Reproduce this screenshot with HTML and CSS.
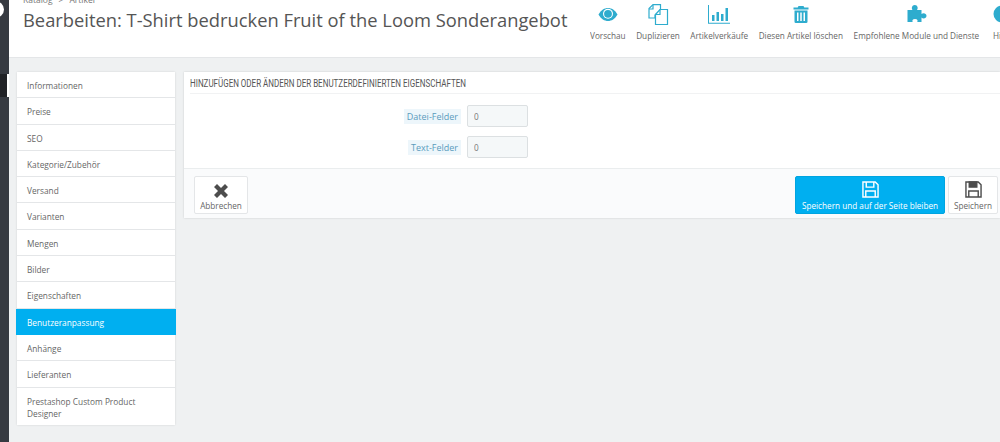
FILE: index.html
```html
<!doctype html>
<html>
<head>
<meta charset="utf-8">
<title>Bearbeiten</title>
<link rel="stylesheet" href="styles.css">
</head>

<body>
	<div class="page">
		<div class="sidebar">
			<span class="logo_dot"></span>
			<span class="side_mark"></span>
		</div>
		<div class="main">
			<div class="head">
				<div class="head_left">
					<div class="crumb"><span>Katalog</span><span>&gt;</span><span>Artikel</span></div>
					<h1>Bearbeiten: T-Shirt bedrucken Fruit of the Loom Sonderangebot</h1>
				</div>
				<ul class="tools">
					<li>
						<svg width="24" height="22" viewBox="0 0 24 22"><path fill="#2eacce" d="M2.500 10.500C5 6 8.500 4 12 4s7 2 9.500 6.500C19 15 15.500 17 12 17s-7-2-9.500-6.500z"/><circle cx="12" cy="9.800" r="5" fill="#fff"/><circle cx="12" cy="9.800" r="3.900" fill="#2eacce"/></svg>
						<span>Vorschau</span>
					</li>
					<li>
						<svg width="24" height="22" viewBox="0 0 24 22" fill="none" stroke="#2eacce" stroke-width="1.200"><path d="M7 .6h7.500v5L9 11v3H3V4.500z"/><path d="M7 1v4H3"/><path fill="#fff" d="M14 5.500h7.500V20.500H9.500V10.500z"/><path d="M14 5.500V10.500H9.500"/></svg>
						<span>Duplizieren</span>
					</li>
					<li>
						<svg width="24" height="22" viewBox="0 0 24 22" fill="#2eacce"><path d="M1 1h1v17.800h21v1H1z"/><rect x="5" y="11" width="2.500" height="6"/><rect x="9.500" y="8" width="2.500" height="9"/><rect x="14" y="10" width="2.500" height="7"/><rect x="18.500" y="4" width="2.500" height="13"/></svg>
						<span>Artikelverkäufe</span>
					</li>
					<li>
						<svg width="24" height="22" viewBox="0 0 24 22" fill="#2eacce"><path d="M9.500 2h5l.8 1.500h4.200v2h-15v-2h4.200z"/><path fill-rule="evenodd" d="M5.500 6.500h13v11.200A1.300 1.300 0 0 1 17.200 19H6.800a1.300 1.300 0 0 1-1.300-1.300zM8 8.500v8.500h1.500V8.500zM11.250 8.500v8.500h1.500V8.500zM14.500 8.500v8.500H16V8.500z"/></svg>
						<span>Diesen Artikel löschen</span>
					</li>
					<li>
						<svg width="24" height="22" viewBox="0 0 24 22" fill="#2eacce"><path d="M3.500 6h5C7.200 4.500 7.800 1 10.800 1s3.600 3.500 2.200 5h4.500v4c1.500-1.500 5-1 5 1.800s-3.500 3.400-5 1.800V18h-4.300c1-1.500.3-3-2.200-3s-3.100 1.500-2.300 3H3.500z"/></svg>
						<span>Empfohlene Module und Dienste</span>
					</li>
					<li>
						<svg width="24" height="22" viewBox="0 0 24 22"><circle cx="12" cy="10" r="8.500" fill="#2eacce"/></svg>
						<span>Hilfe</span>
					</li>
				</ul>
			</div>
			<div class="content">
				<ul class="menu">
					<li>Informationen</li>
					<li>Preise</li>
					<li>SEO</li>
					<li>Kategorie/Zubehör</li>
					<li>Versand</li>
					<li>Varianten</li>
					<li>Mengen</li>
					<li>Bilder</li>
					<li>Eigenschaften</li>
					<li class="cur">Benutzeranpassung</li>
					<li>Anhänge</li>
					<li>Lieferanten</li>
					<li>Prestashop Custom Product Designer</li>
				</ul>
				<div class="panel">
					<h3><span>Hinzufügen oder ändern der benutzerdefinierten Eigenschaften</span></h3>
					<div class="form">
						<div class="row">
							<label><span>Datei-Felder</span></label>
							<input type="text" value="0">
						</div>
						<div class="row">
							<label><span>Text-Felder</span></label>
							<input type="text" value="0">
						</div>
					</div>
					<div class="foot">
						<a class="btn btn_cancel">
							<svg width="14" height="14" viewBox="0 0 14 14"><path fill="#4d4d4d" d="M0 3l3-3 4 4 4-4 3 3-4 4 4 4-3 3-4-4-4 4-3-3 4-4z"/></svg>
							<span>Abbrechen</span>
						</a>
						<div class="foot_right">
							<a class="btn btn_blue">
								<svg width="17" height="17" viewBox="0 0 18 18" fill="none" stroke="#fff" stroke-width="1.500"><path d="M1 1h13l3 3v13H1z"/><path d="M4.500 1v5.500h8V1M4 17v-6.500h10V17"/></svg>
								<span>Speichern und auf der Seite bleiben</span>
							</a>
							<a class="btn btn_save">
								<svg width="17" height="17" viewBox="0 0 18 18" fill="none" stroke="#4d4d4d" stroke-width="1.500"><path d="M1 1h13l3 3v13H1z"/><path fill="#4d4d4d" d="M4.500 1v5.500h8V1z"/><path d="M4 17v-6.500h10V17"/></svg>
								<span>Speichern</span>
							</a>
						</div>
					</div>
				</div>
			</div>
		</div>
	</div>
</body>
</html>
```

FILE: styles.css
```css
*{ margin:0; padding:0; list-style:none; box-sizing:border-box; }
html,body{ height:442px; overflow:hidden; }
body{ background:#eff1f2; font-family:"Open Sans","Noto Sans",sans-serif; font-size:8.2px; color:#666; }
.page{ display:flex; height:442px; }
.sidebar{ position:relative; width:9px; flex:none; background:#363a41; }
.logo_dot{ position:absolute; left:-14px; top:1px; width:18px; height:17px; border-radius:50%; background:#fff; }
.side_mark{ position:absolute; left:0; top:74px; width:9px; height:23px; background:#202226; border-right:2px solid #fff; }
.main{ flex:1; min-width:0; }
.head{ display:flex; height:58px; background:#fff; border-bottom:1px solid #e4e6e8; overflow:hidden; }
.head_left{ flex:1; min-width:0; padding-left:14px; }
.crumb{ display:flex; gap:6px; height:9px; margin-top:-5px; font-size:8.500px; line-height:9px; color:#777; }
h1{ margin-top:3px; font-size:18.340px; font-weight:400; line-height:26px; color:#555; white-space:nowrap; }
.tools{ display:flex; flex:none; gap:10.600px; width:410px; padding-top:4px; overflow:hidden; }
.tools li{ display:flex; flex-direction:column; align-items:center; flex:none; gap:4px; font-size:8.200px; line-height:12px; color:#666; white-space:nowrap; }
.content{ display:flex; align-items:flex-start; gap:9px; padding:14px 0 0 8px; }
.menu{ width:158px; flex:none; background:#fff; box-shadow:0 0 2px rgba(0,0,0,.12); }
.menu li{ padding:8px 10px 5px; border-bottom:1px solid #e4e6e8; font-size:8.300px; line-height:12.300px; color:#666; }
.menu li:last-child{ border-bottom:none; line-height:12px; }
.menu .cur{ margin:0 -1px; padding-left:11px; background:#00aff0; color:#fff; border-bottom:none; padding-bottom:6px; }
.panel{ flex:1; min-width:0; background:#fff; box-shadow:0 0 2px rgba(0,0,0,.15); }
h3{ margin:0 0 0 6px; height:22px; border-bottom:1px solid #f1f2f3; font-family:Roboto,sans-serif; font-size:10px; font-weight:400; line-height:23px; color:#555; text-transform:uppercase; white-space:nowrap; }
h3 span{ display:inline-block; transform:scaleX(.8); transform-origin:left center; }
.form{ display:flex; flex-direction:column; gap:9.300px; height:74px; padding-top:11px; }
.row{ display:flex; align-items:center; height:22px; }
.row label{ width:277px; text-align:right; font-size:9px; line-height:13px; color:#5a9bbd; }
.row label span{ padding:1px 3px; background:#edf6fb; }
.row input{ width:61px; height:22px; margin-left:6px; padding-left:6px; border:1px solid #dce0e2; border-radius:2px; background:#f5f8f9; font:8.200px "Open Sans",sans-serif; color:#777; }
.foot{ display:flex; justify-content:space-between; height:50px; padding:7px 2px 4px 10px; background:#fafbfc; border-top:1px solid #eaedee; }
.foot_right{ display:flex; gap:3px; }
.btn{ display:flex; flex-direction:column; align-items:center; justify-content:flex-end; gap:2px; height:38px; padding:0 0 1px; border:1px solid #e4e6e8; border-radius:2px; background:#fff; font-size:8.200px; line-height:12px; color:#666; white-space:nowrap; }
.btn_cancel{ width:54px; }
.btn_save{ width:50px; }
.btn_blue{ width:150px; background:#00aff0; border-color:#00a4e0; color:#fff; }
```
